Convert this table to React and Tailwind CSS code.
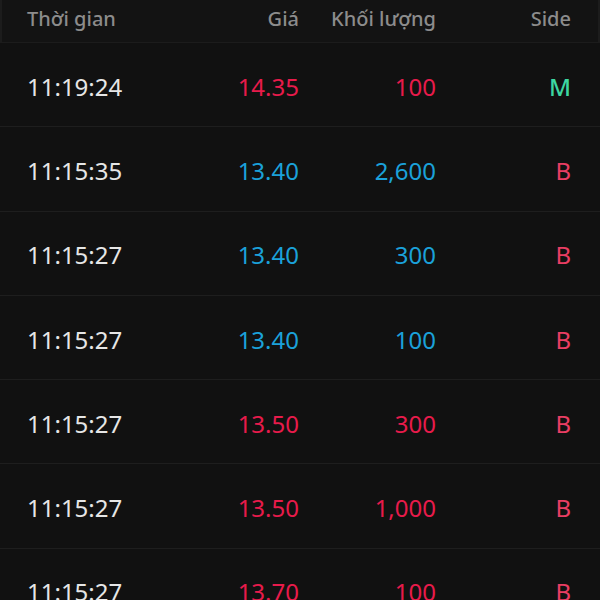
import React from 'react'

const rows = [
  { time: '11:19:24', price: '14.35', vol: '100', side: 'M', up: true },
  { time: '11:15:35', price: '13.40', vol: '2,600', side: 'B', up: false },
  { time: '11:15:27', price: '13.40', vol: '300', side: 'B', up: false },
  { time: '11:15:27', price: '13.40', vol: '100', side: 'B', up: false },
  { time: '11:15:27', price: '13.50', vol: '300', side: 'B', up: true },
  { time: '11:15:27', price: '13.50', vol: '1,000', side: 'B', up: true },
  { time: '11:15:27', price: '13.70', vol: '100', side: 'B', up: true },
]

export default function App() {
  return (
    <div
      className="w-[600px] h-[600px] overflow-hidden bg-[#111111]"
      style={{ fontFamily: '"Noto Sans", "Open Sans", sans-serif' }}
    >
      {/* Header */}
      <div className="flex items-center h-[43px] pl-[25px] bg-[#131313] border-x-2 border-b border-[#1c1c1c] text-[20px] text-[#8c8c8c] font-medium pb-[4px]">
        <div className="w-[170px]">Thời gian</div>
        <div className="w-[102px] text-right">Giá</div>
        <div className="w-[137px] text-right">Khối lượng</div>
        <div className="w-[135px] text-right">Side</div>
      </div>

      {/* Rows */}
      {rows.map((r, i) => {
        const color = r.up ? 'text-[#e81b4b]' : 'text-[#1ba1da]'
        return (
          <div
            key={i}
            className="flex items-center h-[84.3px] pl-[27px] pt-[4px] border-b border-[#1e1e1e] text-[24px] leading-none"
          >
            <div className="w-[172px] text-[#e6e6e6]">{r.time}</div>
            <div className={`w-[100px] text-right ${color}`}>{r.price}</div>
            <div className={`w-[137px] text-right ${color}`}>{r.vol}</div>
            <div
              className={`w-[135px] text-right ${
                r.side === 'M' ? 'text-[#3dd6a1] font-medium' : 'text-[#ea3e63]'
              }`}
            >
              {r.side}
            </div>
          </div>
        )
      })}
    </div>
  )
}
